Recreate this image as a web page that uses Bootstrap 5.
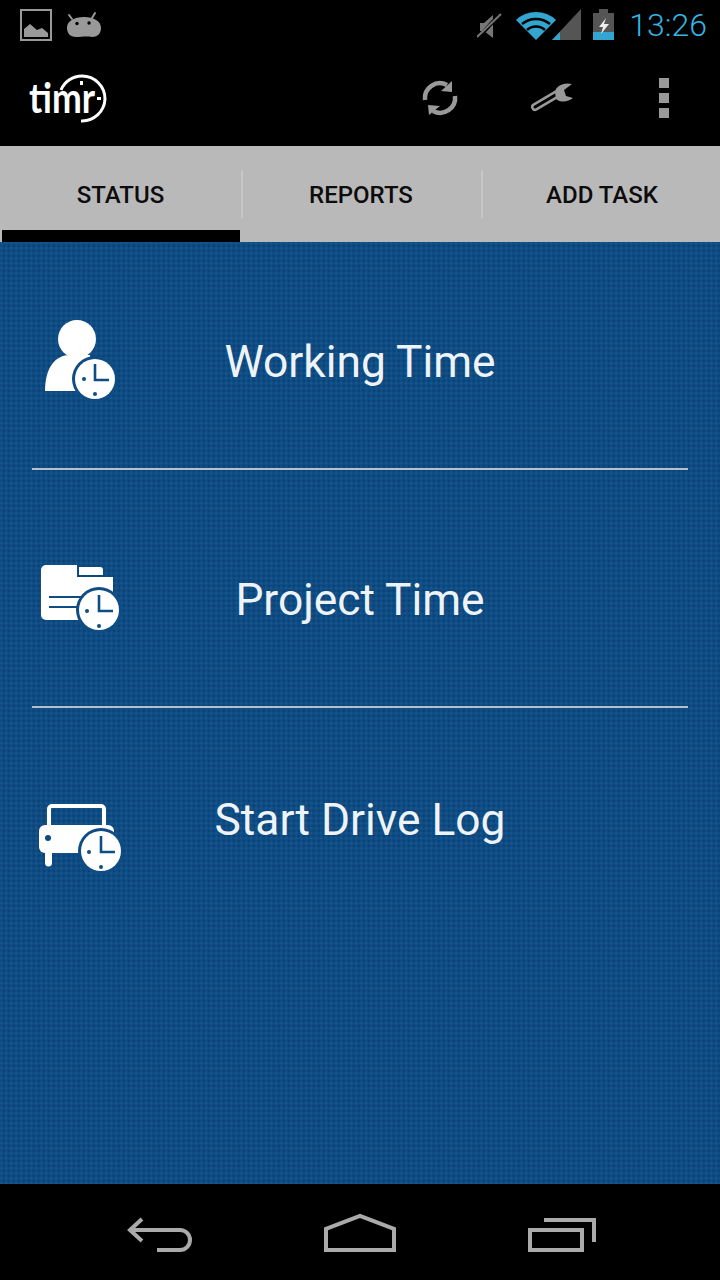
<!DOCTYPE html>
<html lang="en"><head><meta charset="utf-8"><title>timr</title>
<link rel="stylesheet" href="https://cdn.jsdelivr.net/npm/bootstrap@5.3.0/dist/css/bootstrap.min.css">
<style>
html,body{margin:0;background:#000;}
.phone{width:720px;height:1280px;font-family:Roboto,"Liberation Sans",sans-serif;overflow:hidden;}
.statusbar{height:50px;background:#000;}
.actionbar{height:96px;background:#000;}
.clock-txt{color:#33b5e5;font-size:32px;font-weight:300;line-height:50px;margin-right:13px;}
.tabstrip{height:96px;background:#b9b9b9;}
.tabcell{height:96px;color:#0c0c0c;font-size:24px;font-weight:500;position:relative;padding-top:2px;}
.t1{width:241px;}
.t2{width:240px;}
.t3{width:239px;padding-left:3px;}
.tabcell.on::after{content:"";position:absolute;left:2px;right:1px;bottom:0;height:12px;background:#000;}
.tabcell+.tabcell::before{content:"";position:absolute;left:0;top:24px;height:48px;width:2px;background:#c6c6c6;}
.bluepane{height:942px;background-color:#0f4c83;background-image:radial-gradient(circle at 1.25px 1.25px,#15568e 0,#15568e .9px,transparent 1.4px),radial-gradient(circle at 3.75px 3.75px,#0b4274 0,#0b4274 .9px,transparent 1.4px);background-size:5px 5px;}
.menurow{display:grid;grid-template-columns:1fr auto 1fr;align-items:center;color:#eef3f8;font-size:44.3px;line-height:56px;}
.r1{height:226px;padding-top:14px;}
.r2{height:236px;padding-top:24px;}
.r3{height:224px;}
.r3 .ic{margin-top:2px;}
.sep{height:2px;background:#b4bfcb;margin:0 32px;}
.navbottom{height:96px;background:#000;}
svg{display:block;}
.ic{margin-left:32px;margin-top:-2px;}
</style></head><body>
<div class="phone d-flex flex-column">
 <div class="statusbar d-flex align-items-center">
  <svg width="110" height="50" viewBox="0 0 110 50" class="flex-shrink-0">
   <rect x="21" y="10" width="30" height="30" fill="none" stroke="#999" stroke-width="2"/>
   <path d="M24 37V29L30 24L37 30L42 28L48 33V37Z" fill="#999"/>
   <path d="M72 19L69 15M92 18L95 13" stroke="#999" stroke-width="2" stroke-linecap="round"/>
   <path d="M67 28C67 21 74 17 84 17C94 17 101 21 101 28C101 34 97 37 92 37C88 36 80 37 76 37C70 37 67 33 67 28Z" fill="#999"/>
   <circle cx="77" cy="23.5" r="1.7" fill="#000"/><circle cx="89" cy="23" r="1.7" fill="#000"/>
  </svg>
  <div class="ms-auto d-flex align-items-center">
   <svg width="152" height="50" viewBox="478 0 152 50" class="flex-shrink-0">
    <path d="M481 23H485L494 15V38L485 31H481Z" fill="#777"/>
    <path d="M479 38L501 14" stroke="#000" stroke-width="4"/><path d="M478 37L502 14" stroke="#777" stroke-width="2"/>
    <path d="M517 20A29 29 0 0 1 557 20L537 40Z" fill="#33a5d0"/>
    <path d="M523 24A22 22 0 0 1 551 24M528 30A13 13 0 0 1 546 30" fill="none" stroke="#000" stroke-width="2.5"/>
    <path d="M582 9V40H553Z" fill="#555"/><path d="M553 40L561 32V40Z" fill="#33a5d0"/>
    <rect x="600" y="9" width="9" height="4" fill="#555"/><rect x="594" y="13" width="21" height="27" fill="#555"/>
    <rect x="594" y="32" width="21" height="8" fill="#33a5d0"/>
    <path d="M607 18L600 27H604L602 34L610 24H605Z" fill="#eee"/>
   </svg>
   <div class="clock-txt">13:26</div>
  </div>
 </div>
 <div class="actionbar">
  <svg width="720" height="96" viewBox="0 50 720 96">
   <text x="29" y="113" font-family="Lato,Roboto,sans-serif" font-size="42" font-weight="700" fill="#fff" textLength="66" lengthAdjust="spacingAndGlyphs">timr</text>
   <path d="M61 90A23 23 0 0 1 82 76A23 23 0 0 1 105 99A23 23 0 0 1 81 121" fill="none" stroke="#fff" stroke-width="3"/>
   <rect x="80" y="81" width="3" height="4" fill="#fff"/><rect x="97" y="97" width="4" height="3" fill="#fff"/>
   <path d="M425 100A15 15 0 0 1 447 85" fill="none" stroke="#999" stroke-width="4.5"/><path d="M441 91L452 81V92Z" fill="#999"/>
   <path d="M455 96A15 15 0 0 1 433 111" fill="none" stroke="#999" stroke-width="4.5"/><path d="M428 105L440 106L429 115Z" fill="#999"/>
   <path d="M535 107L557 94" stroke="#999" stroke-width="8" stroke-linecap="round"/><path d="M535 107L557 94" stroke="#000" stroke-width="3" stroke-linecap="round"/>
   <path d="M555 92C556 86 563 82 572 84L564 90L566 96L573 98C568 102 561 103 556 99Z" fill="#999"/>
   <rect x="659" y="78" width="10" height="10" fill="#999"/><rect x="659" y="93" width="10" height="10" fill="#999"/><rect x="659" y="108" width="10" height="10" fill="#999"/>
  </svg>
 </div>
 <div class="tabstrip d-flex">
  <div class="tabcell t1 on d-flex align-items-center justify-content-center">STATUS</div>
  <div class="tabcell t2 d-flex align-items-center justify-content-center">REPORTS</div>
  <div class="tabcell t3 d-flex align-items-center justify-content-center">ADD TASK</div>
 </div>
 <div class="bluepane">
  <div class="menurow r1">
   <svg class="ic" width="90" height="110" viewBox="32 306 90 110">
    <circle cx="77" cy="339" r="19" fill="#fff"/>
    <path d="M45 391C45 368 55 355 70 355H90V391Z" fill="#fff"/>
    <circle cx="95" cy="379" r="23" fill="#0f4c83"/><circle cx="95" cy="379" r="20" fill="#fff"/>
    <path d="M95 364V380H109" fill="none" stroke="#0f4c83" stroke-width="2.6"/>
    <circle cx="84" cy="379" r="2" fill="#0f4c83"/><circle cx="95" cy="394" r="2" fill="#0f4c83"/>
   </svg>
   <div>Working Time</div><div></div>
  </div>
  <div class="sep"></div>
  <div class="menurow r2">
   <svg class="ic" width="90" height="110" viewBox="32 544 90 110">
    <path d="M46 565H77V577H113V620H46A5 5 0 0 1 41 615V570A5 5 0 0 1 46 565Z" fill="#fff"/>
    <path d="M79 567H100A3 3 0 0 1 103 570V575H79Z" fill="#fff"/>
    <path d="M49 597H90M49 607H90" stroke="#0f4c83" stroke-width="2"/>
    <circle cx="99" cy="610" r="23" fill="#0f4c83"/><circle cx="99" cy="610" r="20" fill="#fff"/>
    <path d="M99 595V611H113" fill="none" stroke="#0f4c83" stroke-width="2.6"/>
    <circle cx="87" cy="611" r="2" fill="#0f4c83"/><circle cx="99" cy="626" r="2" fill="#0f4c83"/>
   </svg>
   <div>Project Time</div><div></div>
  </div>
  <div class="sep"></div>
  <div class="menurow r3">
   <svg class="ic" width="90" height="110" viewBox="32 765 90 110">
    <path d="M49 824V808A3 3 0 0 1 52 805H101A3 3 0 0 1 104 808V824" fill="none" stroke="#fff" stroke-width="4"/>
    <rect x="39" y="824" width="75" height="28" rx="6" fill="#fff"/>
    <path d="M45 852H52V862A3 3 0 0 1 45 862Z" fill="#fff"/>
    <circle cx="48" cy="837" r="3" fill="#0f4c83"/>
    <circle cx="101" cy="850" r="23" fill="#0f4c83"/><circle cx="101" cy="850" r="20" fill="#fff"/>
    <path d="M101 835V851H115" fill="none" stroke="#0f4c83" stroke-width="2.6"/>
    <circle cx="89" cy="851" r="2" fill="#0f4c83"/><circle cx="101" cy="866" r="2" fill="#0f4c83"/>
   </svg>
   <div>Start Drive Log</div><div></div>
  </div>
 </div>
 <div class="navbottom">
  <svg width="720" height="96" viewBox="0 1184 720 96">
   <g fill="none" stroke="#aaa" stroke-width="4">
    <path d="M142 1219L130 1230L142 1241M131 1230H180A10 10 0 0 1 180 1250H157"/>
    <path d="M326 1250V1229L360 1216L394 1229V1250Z"/>
    <path d="M530 1230H582V1250H530Z"/>
    <path d="M544 1220H594V1242"/>
   </g>
  </svg>
 </div>
</div>
</body></html>
